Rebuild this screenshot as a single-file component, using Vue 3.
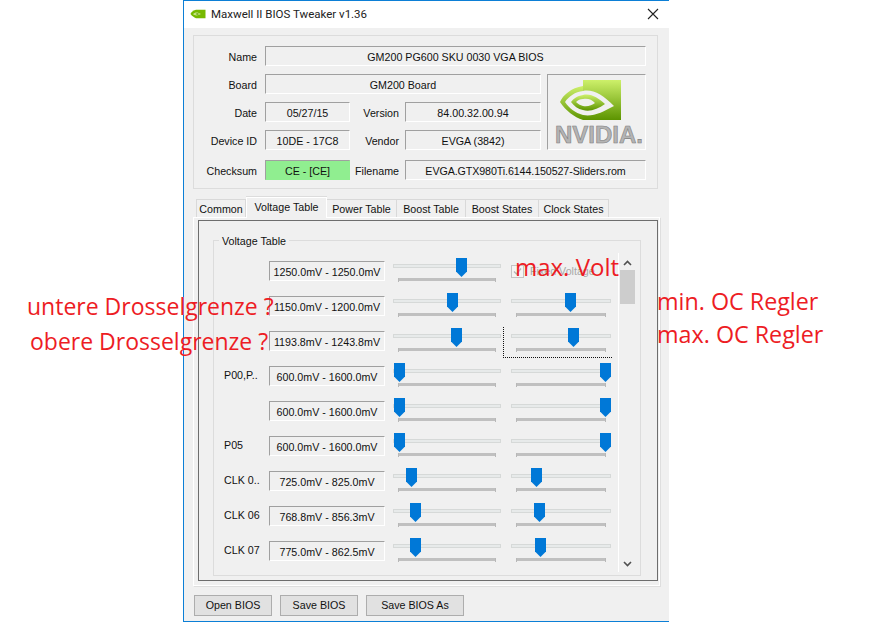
<script setup>
const rows = [
  { label: '', range: '1250.0mV - 1250.0mV', a: 63, b: null },
  { label: '', range: '1150.0mV - 1200.0mV', a: 54, b: 54 },
  { label: '', range: '1193.8mV - 1243.8mV', a: 58, b: 57, focus: true },
  { label: 'P00,P..', range: '600.0mV - 1600.0mV', a: 1, b: 89 },
  { label: '', range: '600.0mV - 1600.0mV', a: 1, b: 89 },
  { label: 'P05', range: '600.0mV - 1600.0mV', a: 1, b: 89 },
  { label: 'CLK 0..', range: '725.0mV - 825.0mV', a: 13, b: 20 },
  { label: 'CLK 06', range: '768.8mV - 856.3mV', a: 17, b: 23 },
  { label: 'CLK 07', range: '775.0mV - 862.5mV', a: 17, b: 24 }
]
const tabs = ['Common', 'Voltage Table', 'Power Table', 'Boost Table', 'Boost States', 'Clock States']
</script>

<template>
  <div class="page">
    <div class="window">
      <header class="titlebar">
        <svg class="appicon" width="16" height="10" viewBox="0 0 16 12" preserveAspectRatio="none">
          <path d="M6 1 C2.5 2 1 4.5 0.5 6 C2 8.5 4 10 6 11 L15.5 11 L15.5 1 L6 1 Z" fill="#76b900" />
          <path d="M3 6 C5 3.5 8 3.5 11 6 C8 8 5 8.5 3 6 Z" fill="#c8e78a" />
          <path d="M5.5 6 C7 4.8 8 5 9 6 C8 7 7 7 5.5 6 Z" fill="#5f9a00" />
        </svg>
        <span class="title">Maxwell II BIOS Tweaker v1.36</span>
        <svg class="close" width="12" height="12" viewBox="0 0 12 12">
          <path d="M1 1 L11 11 M11 1 L1 11" stroke="#222" stroke-width="1.1" fill="none" />
        </svg>
      </header>

      <section class="info">
        <div class="line">
          <span class="lab l1">Name</span>
          <span class="field fname">GM200 PG600 SKU 0030 VGA BIOS</span>
        </div>
        <div class="split">
          <div class="left">
            <div class="line">
              <span class="lab l1">Board</span>
              <span class="field fboard">GM200 Board</span>
            </div>
            <div class="line">
              <span class="lab l1">Date</span>
              <span class="field fshort">05/27/15</span>
              <span class="lab l2">Version</span>
              <span class="field fmid">84.00.32.00.94</span>
            </div>
            <div class="line">
              <span class="lab l1">Device ID</span>
              <span class="field fshort">10DE - 17C8</span>
              <span class="lab l2">Vendor</span>
              <span class="field fmid">EVGA (3842)</span>
            </div>
          </div>
          <div class="logo">
            <svg width="62" height="42" viewBox="1 0 62 42" class="eye">
              <defs>
                <linearGradient id="nv" x1="0" y1="0" x2="0" y2="1">
                  <stop offset="0" stop-color="#cdf06a" />
                  <stop offset="1" stop-color="#5c9400" />
                </linearGradient>
              </defs>
              <path d="M24 7 C12 9 4 16 1 23 C7 32 15 38 24 41 L24 36 C16 34 10 29 6 23 C10 17 16 13 24 12 Z" fill="url(#nv)" />
              <path d="M24 16 C18 17 14 20 12 23 C15 27 19 30 24 31 L24 27 C21 26 19 25 17 23 C19 21 21 20 24 20 Z" fill="url(#nv)" />
              <path d="M24 1 L62 1 L62 41 L24 41 L24 36 C34 38 44 33 55 27 C44 16 34 10 24 12 Z" fill="url(#nv)" />
              <path d="M24 16 C32 14 39 19 46 25 C39 30 31 33 24 31 L24 27 C29 28 33 26 36 24 C33 20 28 19 24 20 Z" fill="url(#nv)" />
            </svg>
            <span class="nvtext">NVIDIA.</span>
          </div>
        </div>
        <div class="line last">
          <span class="lab l1">Checksum</span>
          <span class="field fshort ok">CE - [CE]</span>
          <span class="lab l2">Filename</span>
          <span class="field ffile">EVGA.GTX980Ti.6144.150527-Sliders.rom</span>
        </div>
      </section>

      <nav class="tabs">
        <span v-for="t in tabs" :key="t" class="tab" :class="{ active: t === 'Voltage Table' }">{{ t }}</span>
      </nav>

      <section class="panel">
        <div class="inner">
          <div class="group">
            <span class="legend">Voltage Table</span>
            <div class="scroller">
              <div class="rowlist">
                <div v-for="(r, i) in rows" :key="i" class="row">
                  <span class="rowlabel">{{ r.label }}</span>
                  <span class="field rfield">{{ r.range }}</span>
                  <div class="slider sa">
                    <i class="track"></i>
                    <i class="ticks"></i>
                    <svg class="thumb" :style="{ left: r.a + 'px' }" width="11" height="19" viewBox="0 0 11 19"><path d="M0 0H11V13.5L5.5 19L0 13.5Z" fill="#0078d7" /></svg>
                  </div>
                  <div v-if="r.b !== null" class="slider sb" :class="{ focus: r.focus }">
                    <i class="track"></i>
                    <i class="ticks"></i>
                    <svg class="thumb" :style="{ left: r.b + 'px' }" width="11" height="19" viewBox="0 0 11 19"><path d="M0 0H11V13.5L5.5 19L0 13.5Z" fill="#0078d7" /></svg>
                  </div>
                  <label v-else class="check">
                    <span class="box"><svg width="11" height="11" viewBox="0 0 11 11"><path d="M2 5.5L4.5 8L9 2.5" stroke="#b5b5b5" stroke-width="1.4" fill="none" /></svg></span>
                    <span>Fixed Voltage</span>
                  </label>
                </div>
              </div>
              <div class="scrollbar">
                <svg width="9" height="6" viewBox="0 0 9 6" class="arrow"><path d="M1 5L4.5 1.5L8 5" stroke="#505050" stroke-width="1.6" fill="none" /></svg>
                <div class="sthumb"></div>
                <svg width="9" height="6" viewBox="0 0 9 6" class="arrow down"><path d="M1 1L4.5 4.5L8 1" stroke="#505050" stroke-width="1.6" fill="none" /></svg>
              </div>
            </div>
          </div>
        </div>
      </section>

      <footer class="buttons">
        <button class="b1">Open BIOS</button>
        <button class="b2">Save BIOS</button>
        <button class="b3">Save BIOS As</button>
      </footer>
    </div>

    <span class="note n1">untere Drosselgrenze ?</span>
    <span class="note n2">obere Drosselgrenze ?</span>
    <span class="note n3">max. Volt</span>
    <span class="note n4">min. OC Regler</span>
    <span class="note n5">max. OC Regler</span>
  </div>
</template>

<style>
html, body { margin: 0; background: #fff; }
</style>

<style scoped>
.page {
  position: relative;
  width: 890px;
  height: 623px;
  overflow: hidden;
  background: #fff;
  padding-left: 183px;
  box-sizing: border-box;
  font-family: "Liberation Sans", Arial, sans-serif;
  font-size: 10.7px;
  color: #111;
}
.window {
  width: 486px;
  height: 622px;
  box-sizing: border-box;
  border: 1px solid #0c7fd6;
  border-right: none;
  background: #f0f0f0;
  display: flex;
  flex-direction: column;
}
.titlebar {
  height: 27px;
  box-sizing: border-box;
  background: #fff;
  display: flex;
  align-items: center;
  padding: 0 10px 1px 6px;
}
.appicon { margin-right: 5px; }
.title {
  font-family: Roboto, sans-serif;
  font-size: 11.5px;
  color: #222;
  flex: 1;
}
.info {
  margin: 7px 0 0 9px;
  width: 465px;
  height: 154px;
  box-sizing: border-box;
  border: 1px solid #dcdcdc;
  padding: 10px 0 0 0;
  display: flex;
  flex-direction: column;
}
.line {
  display: flex;
  align-items: center;
  height: 20px;
  margin-bottom: 8px;
}
.line.last { margin: 2px 0 0 0; }
.split { display: flex; height: 76px; margin-bottom: 8px; }
.left { width: 348px; }
.left .line:last-child { margin-bottom: 0; }
.lab { text-align: right; flex: none; white-space: nowrap; padding-top: 1px; }
.l1 { width: 63px; margin-right: 8px; }
.l2 { width: 49px; margin-right: 6px; }
.field {
  display: flex;
  align-items: center;
  justify-content: center;
  height: 20px;
  box-sizing: border-box;
  border: 1px solid;
  border-color: #a0a0a0 #fff #fff #a0a0a0;
  padding-top: 1px;
  white-space: nowrap;
  flex: none;
}
.fname { width: 381px; }
.fboard { width: 276px; }
.fshort { width: 85px; }
.fmid { width: 136px; }
.ffile { width: 241px; letter-spacing: -0.1px; }
.ok { background: #90ee90; border-color: #a0a0a0 #90ee90 #90ee90 #a0a0a0; }
.logo {
  width: 99px;
  height: 76px;
  margin-left: 5px;
  box-sizing: border-box;
  border: 1px solid;
  border-color: #a0a0a0 #fff #fff #a0a0a0;
  display: flex;
  flex-direction: column;
  align-items: flex-start;
}
.eye { margin: 4px 0 0 12px; flex: none; }
.nvtext {
  font-weight: 700;
  font-size: 24px;
  line-height: 19px;
  margin: 4px 0 0 7px;
  color: #b4b4b4;
  -webkit-text-stroke: 0.6px #808080;
  white-space: nowrap;
}
.tabs {
  display: flex;
  margin: 9px 0 0 12px;
  height: 19px;
  align-items: flex-end;
}
.tab {
  height: 18px;
  box-sizing: border-box;
  border: 1px solid #d9d9d9;
  border-bottom: none;
  border-left: none;
  line-height: 18px;
  text-align: center;
  background: #f0f0f0;
  white-space: nowrap;
}
.tab:first-child { border-left: 1px solid #d9d9d9; }
.tab:nth-child(1) { width: 50px; }
.tab:nth-child(2) { width: 81px; }
.tab:nth-child(3) { width: 70px; }
.tab:nth-child(4) { width: 69px; }
.tab:nth-child(5) { width: 73px; }
.tab:nth-child(6) { width: 70px; }
.tab.active {
  height: 21px;
  line-height: 18px;
  margin-bottom: -1px;
  border-color: #fff;
  border-left: 1px solid #fff;
  border-top: 1px solid #fff;
  position: relative;
  z-index: 1;
  box-shadow: 0 -1px 0 #dcdcdc;
}
.panel {
  margin: 0 0 0 9px;
  width: 468px;
  height: 370px;
  box-sizing: border-box;
  border: 1px solid;
  border-color: #fff #dedede #dedede #fff;
  box-shadow: inset -1px -1px 0 #fff;
  padding: 2px 2px 5px 4px;
}
.inner {
  height: 100%;
  box-sizing: border-box;
  border: 1px solid #6d6d6d;
  padding: 19px 16px 4px 14px;
}
.group {
  height: 100%;
  box-sizing: border-box;
  border: 1px solid #dcdcdc;
  position: relative;
  padding: 12px 4px 3px 0;
}
.legend {
  position: absolute;
  top: -7px;
  left: 5px;
  padding: 0 3px;
  background: #f0f0f0;
  line-height: 14px;
}
.scroller { display: flex; height: 100%; }
.rowlist { width: 406px; padding-top: 8px; box-sizing: border-box; border-right: 1px solid #fff; overflow: hidden; }
.row {
  display: flex;
  height: 35px;
  position: relative;
}
.rowlabel { width: 55px; padding-left: 10px; box-sizing: border-box; height: 20px; line-height: 19px; flex: none; white-space: nowrap; }
.rfield { width: 116px; }
.slider { position: relative; flex: none; height: 24px; }
.sa { width: 108px; margin-left: 8px; }
.sb { width: 100px; margin-left: 10px; }
.track {
  position: absolute;
  left: 0; right: 0; top: 3px;
  height: 4px;
  box-sizing: border-box;
  border: 1px solid #d6d9d8;
  background: #e7eaea;
}
.ticks {
  position: absolute;
  left: 5px; right: 5px; top: 17px;
  height: 3px;
  background: #c0c0c0;
}
.ticks::before, .ticks::after {
  content: "";
  position: absolute;
  top: 0;
  width: 1px;
  height: 4px;
  background: #b8b8b8;
}
.ticks::before { left: 0; }
.ticks::after { right: 0; }
.thumb { position: absolute; top: -3px; }
.focus::after {
  content: "";
  position: absolute;
  left: -8px; top: -4px;
  width: 108px; height: 30px;
  border-left: 1px dotted #111;
  border-bottom: 1px dotted #111;
}
.check {
  margin-left: 10px;
  display: flex;
  gap: 6px;
  color: #a8a8a8;
  height: 20px;
  align-items: flex-start;
  padding-top: 4px;
  line-height: 13px;
}
.box {
  width: 13px; height: 13px;
  box-sizing: border-box;
  border: 1px solid #c4c4c4;
  background: #f4f4f4;
  display: block;
}
.box svg { display: block; }
.scrollbar {
  width: 17px;
  display: flex;
  flex-direction: column;
  align-items: center;
}
.arrow { margin-top: 7px; flex: none; }
.sthumb { width: 15px; height: 34px; background: #cdcdcd; margin-top: 4px; flex: none; }
.arrow.down { margin-top: auto; margin-bottom: 5px; }
.buttons { display: flex; gap: 8px; margin: 8px 0 0 10px; }
button {
  height: 21px;
  box-sizing: border-box;
  border: 1px solid #adadad;
  background: #e1e1e1;
  font: inherit;
  color: #111;
  padding: 0 0 1px;
}
.b1, .b2 { width: 78px; }
.b3 { width: 98px; }
.note {
  position: absolute;
  font-family: "Open Sans", sans-serif;
  font-size: 23px;
  line-height: 28px;
  color: #ed1c24;
  white-space: nowrap;
}
.n1 { left: 27px; top: 292px; }
.n2 { left: 30px; top: 327px; }
.n3 { left: 515px; top: 253px; font-size: 24px; }
.n4 { left: 657px; top: 287px; font-size: 23.3px; }
.n5 { left: 657px; top: 320px; font-size: 23.3px; }
</style>
